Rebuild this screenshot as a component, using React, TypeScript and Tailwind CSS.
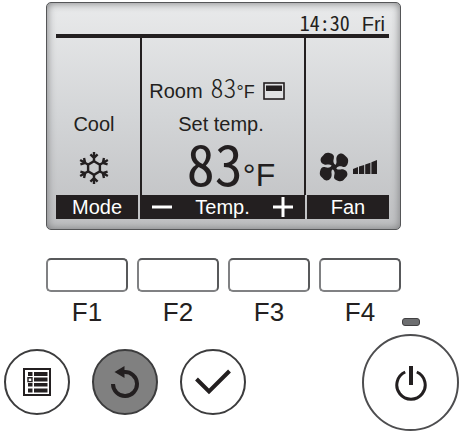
import React from "react";

const functionKeys = ["F1", "F2", "F3", "F4"];

const Snowflake = () => (
  <svg viewBox="0 0 32 32" className="h-8 w-8" fill="none" stroke="#231f20" strokeWidth="2.4" aria-label="Cool mode">
    <path d="M16 9.2 21.9 12.6V19.4L16 22.8 10.1 19.4V12.6Z" />
    {[0, 60, 120, 180, 240, 300].map((angle) => (
      <path key={angle} d="M16 9.5V0M12.4 2.4 16 5.8 19.6 2.4" transform={`rotate(${angle} 16 16)`} />
    ))}
  </svg>
);

const FanIcon = () => (
  <svg viewBox="0 0 30 30" className="h-[30px] w-[30px]" fill="#231f20" aria-label="Fan speed">
    {[0, 90, 180, 270].map((angle) => (
      <path
        key={angle}
        d="M13.6 15.6C12.8 12.6 11.2 12.2 8.2 12.6C4 13 1.4 10.6 1.6 7.4C1.8 5 3.4 4.6 4.6 3C6 1 8 .4 10.6 1C14.2 1.8 15.6 3.6 14.8 6.4C14 9.2 14.2 10.6 16.2 13Z"
        transform={`rotate(${angle} 15 15)`}
      />
    ))}
    <circle cx="15" cy="15" r="2.6" />
  </svg>
);

const FanBars = () => (
  <svg viewBox="0 0 24 14" className="h-[14px] w-6" fill="#231f20" aria-hidden="true">
    <path d="M0 9 5 7V14H0ZM6 6.6 11.2 5V14H6ZM12.2 4.4 17.4 2.8V14H12.2ZM18.4 2.2 24 0V14H18.4Z" />
  </svg>
);

const Display = () => {
  return (
    <section className="rounded-[5px] border border-[#555658] bg-linear-to-b from-[#e9eaeb] via-[#d3d5d7] to-[#bfc0c2] pb-[11px] pl-[9px] pr-[11px] shadow-[inset_0_0_8px_#77787a]">
      <div className="flex h-[31px] items-baseline justify-end gap-3 pr-1 pt-2 text-xl leading-6">
        <time className="font-['Noto_Sans_CJK_SC',sans-serif] text-xl leading-6 [font-feature-settings:'hwid']">14:30</time>
        <span>Fri</span>
      </div>
      <div className="h-1 bg-[#231f20]" />

      <div className="grid h-[157px] grid-cols-[84fr_166fr_83fr] text-xl leading-7">
        <div className="flex flex-col items-center gap-[14px] pr-2 pt-[72px]">
          <p>Cool</p>
          <Snowflake />
        </div>

        <div className="flex flex-col items-center border-x-2 border-[#231f20] pt-[39px]">
          <div className="flex h-7 items-center gap-2 pr-3">
            <span>Room</span>
            <span className="flex items-baseline">
              <span className="font-['Noto_Sans_CJK_SC',sans-serif] text-[26px] font-light leading-5 [font-feature-settings:'hwid']">83</span>
              <span className="text-lg leading-7">°F</span>
            </span>
            <svg viewBox="0 0 22 18" className="h-[18px] w-[22px]" aria-hidden="true">
              <rect x="1" y="1" width="20" height="16" fill="#e0e1e3" stroke="#231f20" strokeWidth="1.6" />
              <rect x="3" y="3.5" width="16" height="5.5" fill="#231f20" />
            </svg>
          </div>
          <p className="mt-[5px] pr-1">Set temp.</p>
          <p className="flex items-baseline pl-4">
            <span className="font-['Noto_Sans_CJK_SC',sans-serif] text-[56px] leading-[48px] [font-feature-settings:'hwid']">83</span>
            <span className="text-[32px] leading-8">°F</span>
          </p>
        </div>

        <div className="flex items-center gap-1 self-start pl-[13px] pt-[114px]">
          <FanIcon />
          <FanBars />
        </div>
      </div>

      <div className="grid h-[23px] grid-cols-[82fr_165fr_82fr] gap-[2px] text-xl leading-6 text-white">
        <span className="bg-[#231f20] text-center">Mode</span>
        <span className="flex items-center justify-between bg-[#231f20] px-3">
          <svg viewBox="0 0 20 20" className="h-5 w-5" stroke="white" strokeWidth="3" aria-hidden="true">
            <path d="M0 10H20" />
          </svg>
          <span>Temp.</span>
          <svg viewBox="0 0 20 20" className="h-5 w-5" stroke="white" strokeWidth="3" aria-hidden="true">
            <path d="M0 10H20M10 0V20" />
          </svg>
        </span>
        <span className="bg-[#231f20] text-center">Fan</span>
      </div>
    </section>
  );
};

const App = () => {
  return (
    <main className="w-full max-w-[463px] bg-white pt-[2px] font-['Liberation_Sans',Arial,sans-serif] text-[#231f20]">
      <div className="pl-[46px] pr-[62px]">
        <Display />

        <div className="mt-7 grid grid-cols-4 gap-[9px]">
          {functionKeys.map((name) => (
            <div key={name} className="flex flex-col items-center gap-[10px]">
              <button
                id={name}
                type="button"
                className="h-[34px] w-full rounded-[5px] border-2 border-[#58595b] border-b-[#808183] border-l-[#808183] bg-white"
              />
              <label htmlFor={name} className="text-[26px] leading-5">
                {name}
              </label>
            </div>
          ))}
        </div>
      </div>

      <div className="-mt-1 flex items-end justify-between pl-1 pr-1">
        <div className="flex gap-[22px] pb-4">
          <button type="button" aria-label="Menu" className="grid h-[66px] w-[66px] place-items-center rounded-full border-2 border-[#3c3c3d] bg-white">
            <svg viewBox="0 0 28 28" className="h-7 w-7" fill="#231f20">
              <path d="M1 1H27V27H1Z" fill="white" stroke="#231f20" strokeWidth="2" />
              <path d="M5 4H9.5V8H5ZM11 4H24.5V8H11ZM11 9.5H24.5V13.5H11ZM5 15H9.5V18.5H5ZM11 15H24.5V18.5H11ZM5 20.5H9.5V24.5H5ZM11 20.5H24.5V24.5H11Z" />
              <path d="M5 9.8H9V13.6H5Z" fill="white" stroke="#231f20" strokeWidth="1.4" />
            </svg>
          </button>
          <button type="button" aria-label="Return" className="grid h-[66px] w-[66px] place-items-center rounded-full border-2 border-[#3c3c3d] bg-[#808080]">
            <svg viewBox="0 0 30 32" className="h-8 w-[30px]">
              <path d="M3 18A12 12 0 1 0 14 6" fill="none" stroke="#231f20" strokeWidth="4" />
              <path d="M4.5 6 14.5 0V12Z" fill="#231f20" />
            </svg>
          </button>
          <button type="button" aria-label="Select" className="grid h-[66px] w-[66px] place-items-center rounded-full border-2 border-[#3c3c3d] bg-white">
            <svg viewBox="0 0 36 26" className="h-[26px] w-9" fill="none" stroke="#231f20" strokeWidth="4">
              <path d="M1.5 10 14 22.5 34.5 2" />
            </svg>
          </button>
        </div>

        <div className="flex flex-col items-center gap-2">
          <span className="h-2 w-[18px] rounded-[3px] border border-[#414042] bg-[#6d6e70]" />
          <button type="button" aria-label="On/Off" className="grid h-[97px] w-[97px] place-items-center rounded-full border-2 border-[#4d4d4f] bg-white">
            <svg viewBox="0 0 32 36" className="h-9 w-8" fill="none" stroke="#231f20">
              <path d="M10.2 7A14.2 14.2 0 1 0 21.8 7" strokeWidth="3" />
              <path d="M16 1V20" strokeWidth="4" />
            </svg>
          </button>
        </div>
      </div>
    </main>
  );
};

export default App;
